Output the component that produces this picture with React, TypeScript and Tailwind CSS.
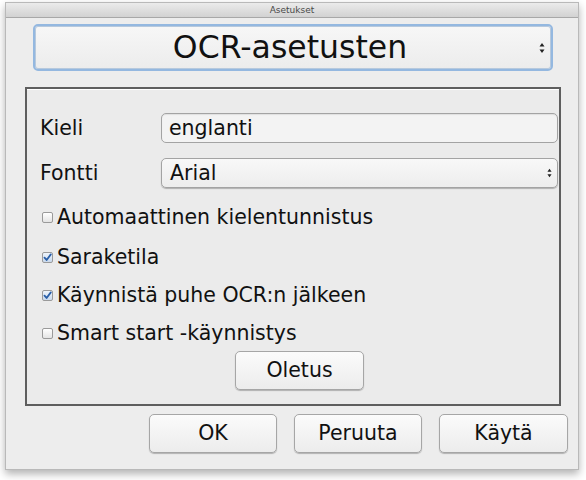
import React from 'react';

function Check({ checked }: { checked?: boolean }) {
  return (
    <span
      className={
        'mr-[4px] inline-flex h-[11px] w-[11px] shrink-0 items-center justify-center rounded-[2px] border border-[#9a9a9a] bg-gradient-to-b ' +
        (checked ? 'from-[#eef4fb] to-[#c9d9ec]' : 'from-white to-[#e4e4e4]')
      }
    >
      {checked && (
        <svg width="9" height="9" viewBox="0 0 9 9">
          <path d="M1.5 4.6 L3.6 7 L7.8 1.4" fill="none" stroke="#2a5fa8" strokeWidth="1.8" strokeLinecap="round" strokeLinejoin="round" />
        </svg>
      )}
    </span>
  );
}

function Arrows({ size = 6 }: { size?: number }) {
  return (
    <svg width={size} height={size * 2} viewBox="0 0 6 12">
      <path d="M3 1 L5.5 4.5 L0.5 4.5 Z" fill="#222" />
      <path d="M3 11 L5.5 7.5 L0.5 7.5 Z" fill="#222" />
    </svg>
  );
}

function Button({ label, className }: { label: string; className?: string }) {
  return (
    <div
      className={
        'flex items-center justify-center rounded-[5px] border border-[#a6a6a6] bg-gradient-to-b from-[#fbfbfb] to-[#ececec] shadow-[0_1px_1px_rgba(0,0,0,0.25)] ' +
        (className ?? '')
      }
    >
      {label}
    </div>
  );
}

export default function App() {
  return (
    <div
      className="h-[480px] w-[586px] overflow-hidden bg-white pt-[2px] pl-[5px] text-[20.5px] text-[#111]"
      style={{ fontFamily: '"DejaVu Sans", sans-serif' }}
    >
      <div className="flex h-[468px] w-[574px] flex-col border border-[#b9b9b9] bg-[#ededed] shadow-[0_4px_8px_rgba(0,0,0,0.3)]">
        {/* Title bar */}
        <div className="flex h-[15px] shrink-0 items-center justify-center border-b border-[#a8a8a8] bg-gradient-to-b from-[#ebebeb] to-[#d2d2d2] text-[9px] leading-none text-[#4a4a4a]">
          Asetukset
        </div>

        {/* Big select */}
        <div className="ml-[27px] mt-[6px] flex h-[47px] w-[520px] items-center rounded-[5px] border-2 border-[#94b8e0] bg-gradient-to-b from-[#f7f7f7] to-[#ececec] shadow-[inset_0_0_0_1px_#b7c9dd]">
          <div className="flex-1 pl-[8px] text-center text-[31.5px] leading-none">OCR-asetusten</div>
          <div className="mr-[4px] flex w-[10px] justify-center">
            <Arrows />
          </div>
        </div>

        {/* Group */}
        <div className="ml-[19px] mt-[16px] flex h-[319px] w-[536px] flex-col border-2 border-[#5e5e5e] bg-[#ebebeb] shadow-[inset_0_1px_0_#fff]">
          <div className="mt-[24px] flex items-center">
            <span className="ml-[13px] w-[121px]">Kieli</span>
            <div className="flex h-[30px] w-[397px] items-center rounded-[5px] border border-[#a3a3a3] bg-[#f3f3f3] pl-[7px] shadow-[inset_0_1px_1px_rgba(0,0,0,0.08)]">
              englanti
            </div>
          </div>
          <div className="mt-[14px] flex items-center">
            <span className="ml-[13px] w-[121px]">Fontti</span>
            <div className="flex h-[30px] w-[397px] items-center rounded-[5px] border border-[#a3a3a3] bg-gradient-to-b from-[#f8f8f8] to-[#ededed] pl-[8px] shadow-[0_1px_1px_rgba(0,0,0,0.25)]">
              <span className="flex-1">Arial</span>
              <span className="mr-[5px] flex">
                <Arrows size={5} />
              </span>
            </div>
          </div>
          <div className="ml-[15px] mt-[17px] flex h-[24px] items-center">
            <Check />
            Automaattinen kielentunnistus
          </div>
          <div className="ml-[15px] mt-[16px] flex h-[24px] items-center">
            <Check checked />
            Saraketila
          </div>
          <div className="ml-[15px] mt-[14px] flex h-[24px] items-center">
            <Check checked />
            Käynnistä puhe OCR:n jälkeen
          </div>
          <div className="ml-[15px] mt-[14px] flex h-[24px] items-center">
            <Check />
            Smart start -käynnistys
          </div>
          <div className="ml-[208px] mt-[5px]">
            <Button label="Oletus" className="h-[39px] w-[129px]" />
          </div>
        </div>

        {/* Bottom buttons */}
        <div className="mr-[10px] mt-[8px] flex justify-end gap-[17px]">
          <Button label="OK" className="h-[39px] w-[128px]" />
          <Button label="Peruuta" className="h-[39px] w-[128px]" />
          <Button label="Käytä" className="h-[39px] w-[129px]" />
        </div>
      </div>
    </div>
  );
}
